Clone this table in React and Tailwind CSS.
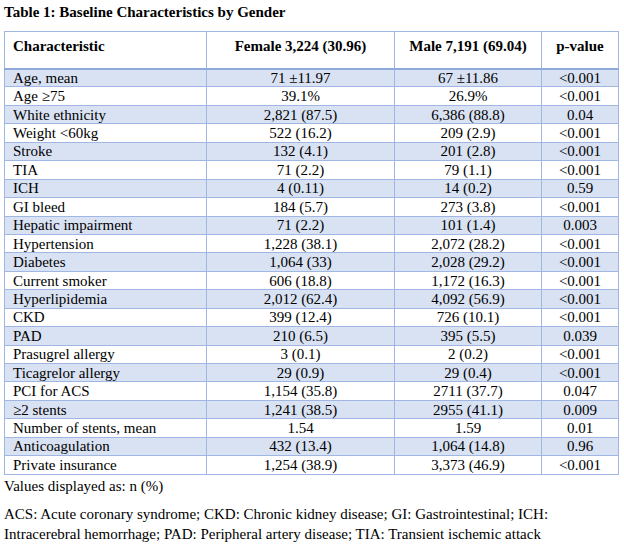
import React from 'react';

const rows = [
  ['Age, mean', '71 ±11.97', '67 ±11.86', '<0.001'],
  ['Age ≥75', '39.1%', '26.9%', '<0.001'],
  ['White ethnicity', '2,821 (87.5)', '6,386 (88.8)', '0.04'],
  ['Weight <60kg', '522 (16.2)', '209 (2.9)', '<0.001'],
  ['Stroke', '132 (4.1)', '201 (2.8)', '<0.001'],
  ['TIA', '71 (2.2)', '79 (1.1)', '<0.001'],
  ['ICH', '4 (0.11)', '14 (0.2)', '0.59'],
  ['GI bleed', '184 (5.7)', '273 (3.8)', '<0.001'],
  ['Hepatic impairment', '71 (2.2)', '101 (1.4)', '0.003'],
  ['Hypertension', '1,228 (38.1)', '2,072 (28.2)', '<0.001'],
  ['Diabetes', '1,064 (33)', '2,028 (29.2)', '<0.001'],
  ['Current smoker', '606 (18.8)', '1,172 (16.3)', '<0.001'],
  ['Hyperlipidemia', '2,012 (62.4)', '4,092 (56.9)', '<0.001'],
  ['CKD', '399 (12.4)', '726 (10.1)', '<0.001'],
  ['PAD', '210 (6.5)', '395 (5.5)', '0.039'],
  ['Prasugrel allergy', '3 (0.1)', '2 (0.2)', '<0.001'],
  ['Ticagrelor allergy', '29 (0.9)', '29 (0.4)', '<0.001'],
  ['PCI for ACS', '1,154 (35.8)', '2711 (37.7)', '0.047'],
  ['≥2 stents', '1,241 (38.5)', '2955 (41.1)', '0.009'],
  ['Number of stents, mean', '1.54', '1.59', '0.01'],
  ['Anticoagulation', '432 (13.4)', '1,064 (14.8)', '0.96'],
  ['Private insurance', '1,254 (38.9)', '3,373 (46.9)', '<0.001'],
];

export default function App() {
  return (
    <div className="w-[624px] h-[548px] bg-white text-black pl-1 pt-[3px] font-['Liberation_Serif','Times_New_Roman',serif]">
      <div className="text-[15px] font-bold leading-[18px]">Table 1: Baseline Characteristics by Gender</div>

      <table className="mt-[10px] w-[614px] border-collapse table-fixed text-[15px] leading-[16px]">
        <colgroup>
          <col className="w-[202px]" />
          <col className="w-[188px]" />
          <col className="w-[147px]" />
          <col className="w-[77px]" />
        </colgroup>
        <thead>
          <tr className="h-[37px]">
            <th className="border border-[#9fb7e2] border-b-2 border-b-[#8eaadb] align-top text-left font-bold pl-[8px] pt-[6px]">Characteristic</th>
            <th className="border border-[#9fb7e2] border-b-2 border-b-[#8eaadb] align-top text-center font-bold pt-[6px]">Female 3,224 (30.96)</th>
            <th className="border border-[#9fb7e2] border-b-2 border-b-[#8eaadb] align-top text-center font-bold pt-[6px]">Male 7,191 (69.04)</th>
            <th className="border border-[#9fb7e2] border-b-2 border-b-[#8eaadb] align-top text-center font-bold pt-[6px]">p-value</th>
          </tr>
        </thead>
        <tbody>
          {rows.map((r, i) => (
            <tr key={i} className={`h-[18.45px] ${i % 2 === 0 ? 'bg-[#d9e2f3]' : 'bg-white'}`}>
              <td className="border border-[#9fb7e2] pl-[8px] p-0 whitespace-nowrap">{r[0]}</td>
              <td className="border border-[#9fb7e2] text-center p-0">{r[1]}</td>
              <td className="border border-[#9fb7e2] text-center p-0">{r[2]}</td>
              <td className="border border-[#9fb7e2] text-center p-0">{r[3]}</td>
            </tr>
          ))}
        </tbody>
      </table>

      <div className="text-[15px] leading-[20px] mt-[1px]">
        <p>Values displayed as: n (%)</p>
        <p className="mt-[8px]">ACS: Acute coronary syndrome; CKD: Chronic kidney disease; GI: Gastrointestinal; ICH:</p>
        <p>Intracerebral hemorrhage; PAD: Peripheral artery disease; TIA: Transient ischemic attack</p>
      </div>
    </div>
  );
}
